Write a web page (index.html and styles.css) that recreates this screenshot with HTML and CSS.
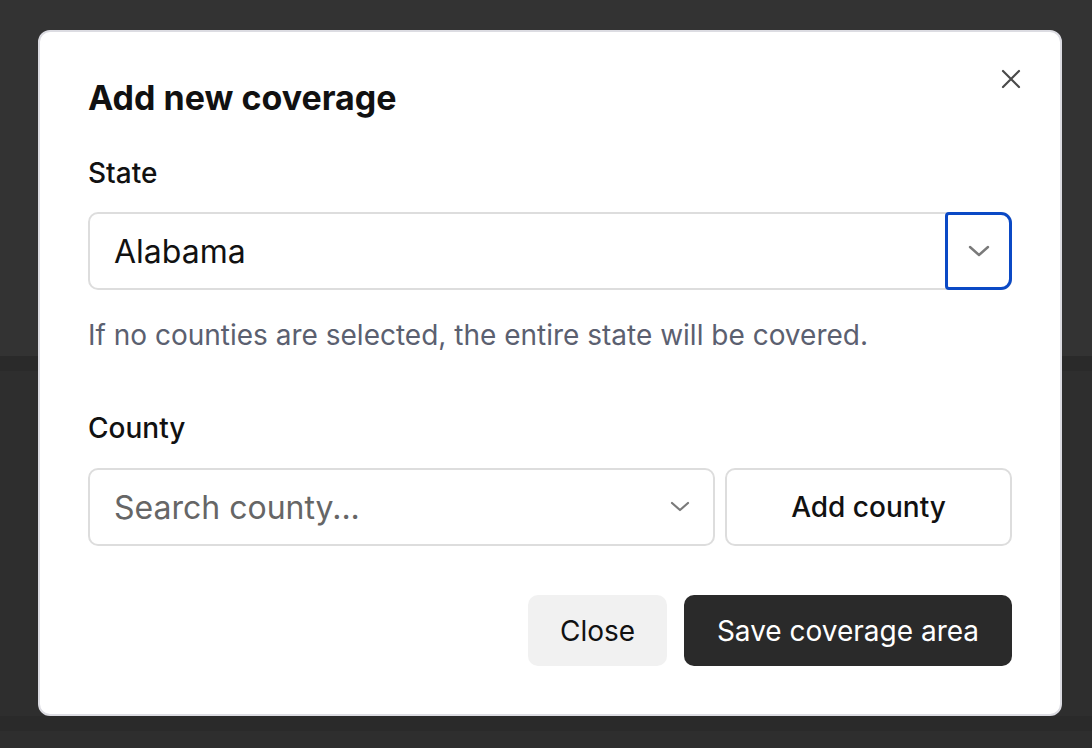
FILE: index.html
```html
<!DOCTYPE html>
<html>
<head>
<meta charset="utf-8">
<link rel="stylesheet" href="styles.css">
</head>
<body>
<div class="backdrop">
  <div class="bd-top"></div>
  <div class="bd-band"></div>
  <div class="bd-mid"></div>
  <div class="bd-band"></div>
  <div class="bd-bottom"></div>
</div>
<div class="overlay">
  <div class="modal">
    <button class="close-x" aria-label="Close">
      <svg width="20" height="20" viewBox="0 0 20 20"><path d="M2 2 L18 18 M18 2 L2 18" stroke="#4a4a4a" stroke-width="2.2" stroke-linecap="round" fill="none"/></svg>
    </button>
    <h2 class="title">Add new coverage</h2>
    <div class="field">
      <div class="label">State</div>
      <div class="select">
        <span class="select-value">Alabama</span>
        <span class="select-btn">
          <svg width="22" height="12" viewBox="0 0 22 12"><path d="M2 2 L11 10 L20 2" stroke="#7a7a7a" stroke-width="2.4" fill="none" stroke-linecap="round" stroke-linejoin="round"/></svg>
        </span>
      </div>
      <div class="help">If no counties are selected, the entire state will be covered.</div>
    </div>
    <div class="field county">
      <div class="label">County</div>
      <div class="county-row">
        <div class="search">
          <span class="placeholder">Search county...</span>
          <svg width="20" height="12" viewBox="0 0 20 12"><path d="M2 2 L10 9 L18 2" stroke="#7a7a7a" stroke-width="2.2" fill="none" stroke-linecap="round" stroke-linejoin="round"/></svg>
        </div>
        <button class="add-btn">Add county</button>
      </div>
    </div>
    <div class="actions">
      <button class="btn-close">Close</button>
      <button class="btn-save">Save coverage area</button>
    </div>
  </div>
</div>
</body>
</html>
```

FILE: styles.css
```css
* { box-sizing: border-box; }
html, body { margin: 0; padding: 0; height: 100%; }
body {
  font-family: Inter, "Noto Sans", sans-serif;
  background: #2e2e2e;
  overflow: hidden;
}
.backdrop { display: flex; flex-direction: column; height: 748px; }
.bd-top { height: 356px; background: #333333; }
.bd-band { height: 15px; background: #2a2a2a; }
.bd-mid { height: 345px; background: #2e2e2e; }
.bd-bottom { flex: 1; background: #2e2e2e; }

.overlay {
  position: fixed;
  inset: 0;
  display: flex;
  justify-content: center;
  padding-top: 30px;
  padding-left: 8px;
}
.modal {
  position: relative;
  width: 1024px;
  height: 686px;
  background: #ffffff;
  border: 2px solid #dcdce2;
  border-radius: 12px;
  padding: 44px 48px 0 48px;
}
.close-x {
  position: absolute;
  top: 35px;
  right: 37px;
  width: 24px;
  height: 24px;
  padding: 0;
  border: 0;
  background: none;
  display: flex;
  align-items: center;
  justify-content: center;
}
.title {
  margin: 0;
  font-size: 34px;
  font-weight: 700;
  color: #111111;
  line-height: 44px;
}
.field { margin-top: 34px; }
.label {
  font-size: 28px;
  color: #111111;
  line-height: 38px;
  font-weight: 500;
}
.select {
  margin-top: 20px;
  height: 78px;
  display: flex;
  border: 2px solid #dddddd;
  border-radius: 10px;
}
.select-value {
  flex: 1;
  display: flex;
  align-items: center;
  padding-left: 24px;
  font-size: 32px;
  color: #111111;
}
.select-btn {
  width: 67px;
  margin: -2px -2px -2px 0;
  border: 3px solid #0b49c5;
  border-radius: 4px 11px 11px 4px;
  display: flex;
  align-items: center;
  justify-content: center;
}
.help {
  margin-top: 26px;
  font-size: 28px;
  color: #5b6070;
  line-height: 38px;
}
.county { margin-top: 55px; }
.county-row {
  margin-top: 21px;
  display: flex;
  gap: 10px;
}
.search {
  flex: 0 0 627px;
  height: 78px;
  border: 2px solid #dddddd;
  border-radius: 10px;
  display: flex;
  align-items: center;
  justify-content: space-between;
  padding: 0 23px 0 24px;
}
.placeholder { font-size: 32px; color: #666666; }
.add-btn {
  flex: 1 1 0;
  min-width: 0;
  height: 78px;
  border: 2px solid #dddddd;
  border-radius: 10px;
  background: #ffffff;
  font-family: inherit;
  font-size: 28px;
  font-weight: 500;
  color: #111111;
}
.actions {
  margin-top: 49px;
  display: flex;
  justify-content: flex-end;
  gap: 17px;
}
.actions button {
  height: 71px;
  border: 0;
  border-radius: 10px;
  font-family: inherit;
  font-size: 28px;
}
.btn-close {
  width: 139px;
  background: #f1f1f1;
  color: #111111;
}
.btn-save {
  width: 328px;
  background: #2a2a2a;
  color: #ffffff;
}
```
